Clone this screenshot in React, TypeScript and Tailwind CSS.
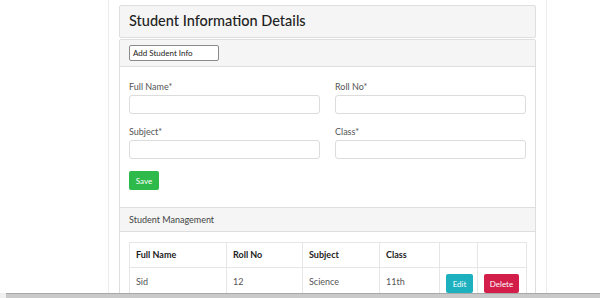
import React from 'react'

// ── Form field ───────────────────────────────────────────────

function Field({ label }: { label: string }) {
  return (
    <div className="flex flex-col">
      <label className="mb-[3px] text-[9px] leading-[10px] text-[#555]">{label}</label>
      <input
        type="text"
        className="h-[19px] w-full rounded-[3px] border border-[#dcdcdc] bg-white outline-none"
      />
    </div>
  )
}

const cols = ['w-[97px]', 'w-[76px]', 'w-[77px]', 'w-[60px]', 'w-[38px]', 'w-[49px]']

export default function App() {
  return (
    <div
      className="relative h-[298px] w-[600px] overflow-hidden bg-white text-[#333]"
      style={{ fontFamily: 'Lato, "Noto Sans", sans-serif' }}
    >
      <div className="ml-[108px] h-full w-[439px] border-x border-[#ececec] px-[10px] pt-[5px]">
        {/* Title card */}
        <div className="flex h-[33px] items-center rounded-[2px] border border-[#dedede] bg-[#f5f5f5] px-[9px]">
          <h1 className="text-[14.5px] font-medium leading-none text-[#222]">Student Information Details</h1>
        </div>

        {/* Form card */}
        <div className="mt-[1px] rounded-[2px] border border-[#dedede] bg-white">
          <div className="flex h-[27px] items-center border-b border-[#dedede] bg-[#f5f5f5] px-[9px]">
            <div className="flex h-[16px] w-[90px] items-center rounded-[2px] border border-[#8a8a8a] bg-white px-[3px] text-[8px] text-[#222]">
              Add Student Info
            </div>
          </div>
          <div className="px-[9px] pb-[17px] pt-[15px]">
            <div className="grid grid-cols-2 gap-x-[15px] gap-y-[13px]">
              <Field label="Full Name*" />
              <Field label="Roll No*" />
              <Field label="Subject*" />
              <Field label="Class*" />
            </div>
            <button className="mt-[12px] flex h-[19px] w-[30px] items-center justify-center rounded-[2px] bg-[#2dba4b] text-[8px] text-white">
              Save
            </button>
          </div>

          {/* Student management */}
          <div className="flex h-[25px] items-center border-y border-[#dedede] bg-[#f5f5f5] px-[9px] text-[9px] text-[#444]">
            Student Management
          </div>
          <div className="px-[9px] pt-[10px]">
            <table className="w-[397px] table-fixed border-collapse text-[9px]">
              <thead>
                <tr className="h-[25px]">
                  {['Full Name', 'Roll No', 'Subject', 'Class', '', ''].map((h, i) => (
                    <th
                      key={i}
                      className={`${cols[i]} border border-[#e6e6e6] px-[6px] text-left font-bold text-[#222]`}
                    >
                      {h}
                    </th>
                  ))}
                </tr>
              </thead>
              <tbody>
                <tr className="h-[28px] text-[#555]">
                  <td className="border border-[#e6e6e6] px-[6px] align-top pt-[7px]">Sid</td>
                  <td className="border border-[#e6e6e6] px-[6px] align-top pt-[7px]">12</td>
                  <td className="border border-[#e6e6e6] px-[6px] align-top pt-[7px]">Science</td>
                  <td className="border border-[#e6e6e6] px-[6px] align-top pt-[7px]">11th</td>
                  <td className="border border-[#e6e6e6] px-[6px] align-top pt-[6px]">
                    <button className="flex h-[19px] w-[27px] items-center justify-center rounded-[2px] bg-[#1db0be] text-[8px] text-white">
                      Edit
                    </button>
                  </td>
                  <td className="border border-[#e6e6e6] px-[6px] align-top pt-[6px]">
                    <button className="flex h-[19px] w-[35px] items-center justify-center rounded-[2px] bg-[#d21e49] text-[8px] text-white">
                      Delete
                    </button>
                  </td>
                </tr>
              </tbody>
            </table>
          </div>
        </div>
      </div>

      {/* Horizontal scrollbar */}
      <div className="absolute bottom-0 left-0 flex h-[5px] w-full">
        <div className="w-[6px] bg-[#f0f0f0]" />
        <div className="flex-1 border-t border-[#a8a8a8] bg-[#c9c9c9]" />
      </div>
    </div>
  )
}
